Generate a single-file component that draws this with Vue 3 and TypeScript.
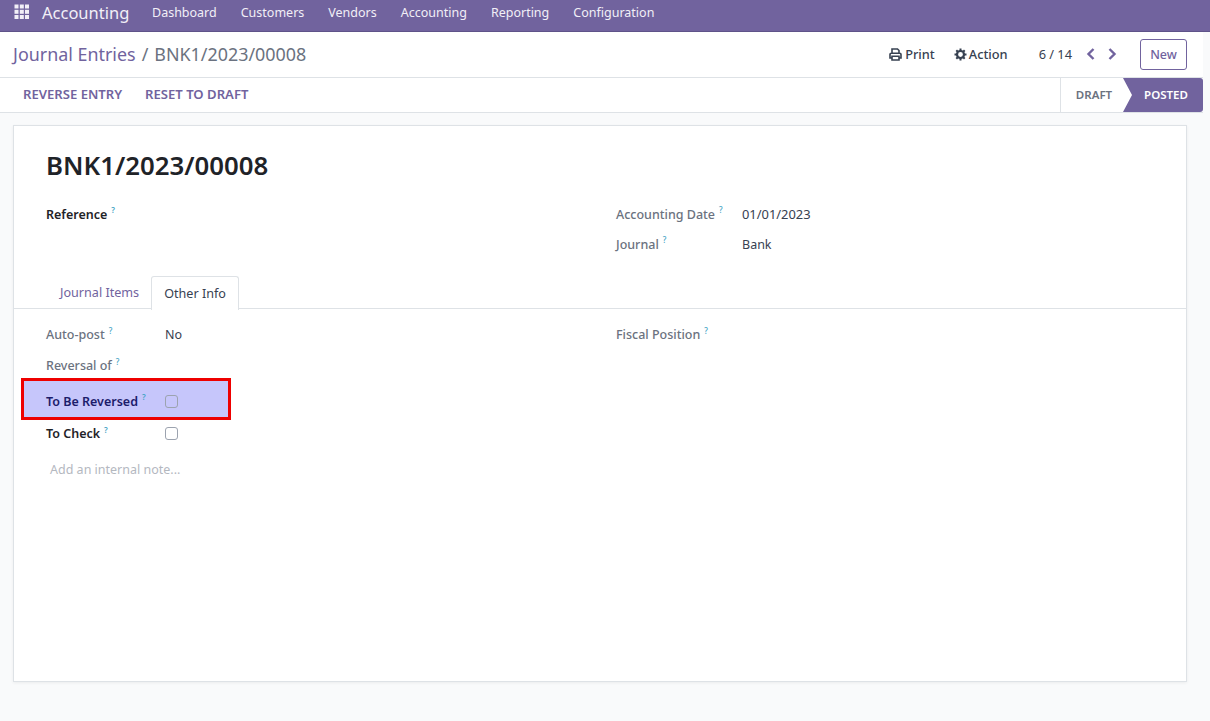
<script setup lang="ts">
const menus = ['Dashboard', 'Customers', 'Vendors', 'Accounting', 'Reporting', 'Configuration']
</script>

<template>
  <div class="page">
    <header class="navbar">
      <svg class="apps" width="16" height="16" viewBox="0 0 16 16">
        <g fill="#f2eff7">
          <rect x="0.5" y="0.5" width="4" height="4" />
          <rect x="5.8" y="0.5" width="4" height="4" />
          <rect x="11" y="0.5" width="4" height="4" />
          <rect x="0.5" y="5.8" width="4" height="4" />
          <rect x="5.8" y="5.8" width="4" height="4" />
          <rect x="11" y="5.8" width="4" height="4" />
          <rect x="0.5" y="11" width="4" height="4" />
          <rect x="5.8" y="11" width="4" height="4" />
          <rect x="11" y="11" width="4" height="4" />
        </g>
      </svg>
      <span class="brand">Accounting</span>
      <nav class="menu">
        <span v-for="m in menus" :key="m">{{ m }}</span>
      </nav>
    </header>

    <div class="main">
      <div class="control">
        <div class="crumbs">
          <span class="crumb-link">Journal Entries</span>
          <span class="crumb-sep">/</span>
          <span class="crumb-cur">BNK1/2023/00008</span>
        </div>
        <div class="actions">
          <span class="act print">
            <svg width="13" height="13" viewBox="0 0 13 13">
              <path d="M3 5V1h5.5L10 2.5V5M3 10H1V6.5A1.2 1.2 0 0 1 2.2 5.3h8.6A1.2 1.2 0 0 1 12 6.5V10h-2M3 8.3h7V12H3z" fill="none" stroke="#374151" stroke-width="1.6" />
            </svg>
            Print
          </span>
          <span class="act">
            <svg width="13" height="13" viewBox="0 0 13 13">
              <circle cx="6.5" cy="6.5" r="3.5" fill="none" stroke="#374151" stroke-width="2.2" />
              <path d="M6.5 0.5v2.5M6.5 10v2.5M0.5 6.5H3M10 6.5h2.5M2.3 2.3l1.7 1.7M9 9l1.7 1.7M10.7 2.3L9 4M4 9l-1.7 1.7" stroke="#374151" stroke-width="2" />
            </svg>
            Action
          </span>
          <span class="pager">6 / 14</span>
          <svg class="chev" width="12" height="12" viewBox="0 0 12 12">
            <path d="M8.5 1L3.5 6l5 5" fill="none" stroke="#71639e" stroke-width="2.4" />
          </svg>
          <svg class="chev second" width="12" height="12" viewBox="0 0 12 12">
            <path d="M3.5 1l5 5-5 5" fill="none" stroke="#71639e" stroke-width="2.4" />
          </svg>
          <button class="new">New</button>
        </div>
      </div>

      <div class="statusbar">
        <div class="btns">
          <span>REVERSE ENTRY</span>
          <span>RESET TO DRAFT</span>
        </div>
        <div class="steps">
          <span class="step">DRAFT</span>
          <span class="step current">POSTED</span>
        </div>
      </div>

      <div class="sheet-wrap">
        <section class="sheet">
          <h1 class="title">BNK1/2023/00008</h1>
          <div class="cols head-cols">
            <div class="col">
              <div class="field"><label class="dark">Reference<sup>?</sup></label></div>
            </div>
            <div class="col">
              <div class="field"><label>Accounting Date<sup>?</sup></label><span class="digits">01/01/2023</span></div>
              <div class="field"><label>Journal<sup>?</sup></label><span>Bank</span></div>
            </div>
          </div>

          <div class="tabs">
            <span class="tab">Journal Items</span>
            <span class="tab active">Other Info</span>
          </div>

          <div class="cols tab-cols">
            <div class="col">
              <div class="row"><label class="short">Auto-post<sup>?</sup></label><span>No</span></div>
              <div class="row"><label class="short">Reversal of<sup>?</sup></label></div>
              <div class="row mark">
                <label class="short dark">To Be Reversed<sup>?</sup></label>
                <span class="check"></span>
              </div>
              <div class="row"><label class="short dark">To Check<sup>?</sup></label><span class="check"></span></div>
              <div class="note">Add an internal note...</div>
            </div>
            <div class="col">
              <div class="row"><label>Fiscal Position<sup>?</sup></label></div>
            </div>
          </div>
        </section>
      </div>
    </div>
  </div>
</template>

<style>
html,
body {
  margin: 0;
  background: #f9fafb;
}
</style>

<style scoped>
.page {
  width: 1210px;
  height: 721px;
  overflow: hidden;
  font-family: "Noto Sans", "Open Sans", sans-serif;
  font-size: 12.5px;
  color: #374151;
  background: #f9fafb;
}

.navbar {
  height: 25px;
  background: #71639e;
  border-bottom: 1px solid #5f5389;
  display: flex;
  align-items: center;
  padding-left: 14px;
  padding-bottom: 6px;
  color: #f2eff7;
}
.apps {
  margin-right: 12px;
  margin-top: -2px;
}
.brand {
  font-size: 16.5px;
  margin-top: -1px;
  width: 110px;
}
.menu {
  display: flex;
  gap: 24px;
  font-size: 12.5px;
}

.main {
  width: 1203px;
}

.control {
  height: 45px;
  background: #fff;
  border-bottom: 1px solid #dee2e6;
  display: flex;
  justify-content: space-between;
  align-items: center;
  padding: 0 16px 0 13px;
}
.crumbs {
  font-size: 17.9px;
  display: flex;
  gap: 6px;
  margin-top: -2px;
}
.crumb-link {
  color: #71639e;
}
.crumb-sep,
.crumb-cur {
  color: #6b7280;
}
.actions {
  display: flex;
  align-items: center;
}
.act {
  display: flex;
  align-items: center;
  gap: 2px;
  font-size: 12.8px;
  font-weight: 500;
  margin-right: 19px;
  padding-bottom: 2px;
}
.act.print {
  gap: 3px;
  margin-right: 17px;
}
.act + .act {
  margin-left: 1px;
}
.act svg {
  margin-top: 2px;
  margin-left: 1px;
}
.pager {
  margin-left: 12px;
  margin-right: 13px;
  font-size: 12.8px;
  padding-bottom: 2px;
}
.chev {
  margin-top: -1px;
}
.chev.second {
  margin-left: 9px;
}
.new {
  margin-left: 22px;
  width: 47px;
  height: 31px;
  padding: 0;
  background: #fff;
  border: 1px solid #71639e;
  border-radius: 3px;
  color: #71639e;
  font: 500 12.5px "Noto Sans", sans-serif;
}

.statusbar {
  height: 34px;
  background: #fff;
  border-bottom: 1px solid #dee2e6;
  display: flex;
  justify-content: space-between;
}
.btns {
  display: flex;
  gap: 23px;
  align-items: center;
  padding-left: 23px;
  padding-bottom: 2px;
  color: #71639e;
  font-weight: 600;
  font-size: 13.1px;
}
.steps {
  display: flex;
  font-size: 11.5px;
  font-weight: 600;
}
.step {
  display: flex;
  align-items: center;
  justify-content: center;
  box-sizing: border-box;
  width: 63px;
  padding: 0 0 2px 4px;
  color: #6b7280;
  border-left: 1px solid #dee2e6;
}
.step.current {
  width: 80px;
  padding-left: 6px;
  color: #fff;
  background: #71639e;
  border-left: 0;
  border-radius: 0 3px 3px 0;
  clip-path: polygon(0 0, 100% 0, 100% 100%, 0 100%, 9px 50%);
}

.sheet-wrap {
  padding: 12px 16px 0 13px;
}
.sheet {
  height: 555px;
  background: #fff;
  border: 1px solid #dee2e6;
  box-shadow: 0 1px 3px rgba(0, 0, 0, 0.06);
}
.title {
  margin: 0;
  padding: 23px 0 0 32px;
  font-size: 25.8px;
  line-height: 32px;
  font-weight: 600;
  color: #1f2328;
}
.cols {
  display: flex;
}
.head-cols {
  margin-top: 18px;
}
.col {
  width: 570px;
  padding-left: 32px;
  box-sizing: border-box;
}
.field {
  height: 30px;
  display: flex;
  align-items: center;
}
.field label,
.row label {
  width: 126px;
  font-weight: 500;
  color: #6b7280;
}
.digits {
  font-size: 12.9px;
}
.row label.short {
  width: 119px;
}
label.dark,
.row label.dark {
  color: #1f2328;
  font-weight: 600;
}
sup {
  font-size: 8px;
  color: #3fa3c4;
  margin-left: 4px;
  line-height: 0;
}

.tabs {
  display: flex;
  margin-top: 17px;
  padding-left: 33px;
  height: 32px;
  border-bottom: 1px solid #dee2e6;
  font-size: 12.6px;
}
.tab {
  display: flex;
  align-items: center;
  padding: 0 12px 0 13px;
  color: #71639e;
}
.tab.active {
  padding-left: 12px;
  color: #374151;
  background: #fff;
  border: 1px solid #dee2e6;
  border-bottom: 0;
  height: 33px;
  border-radius: 3px 3px 0 0;
}

.tab-cols {
  padding-top: 10px;
}
.row {
  height: 31px;
  display: flex;
  align-items: center;
}
.row.mark {
  box-sizing: border-box;
  height: 42px;
  margin: -3px 0 -2px -25px;
  width: 210px;
  padding: 4px 0 0 22px;
  background: #c6c6fb;
  border: 3px solid #ee0000;
}
.row.mark label.dark {
  color: #1c1c6b;
}
.check {
  width: 11px;
  height: 11px;
  border: 1px solid #9ca3af;
  border-radius: 3px;
}
.note {
  margin: 12px 0 0 4px;
  color: #b4b8bf;
}
</style>
